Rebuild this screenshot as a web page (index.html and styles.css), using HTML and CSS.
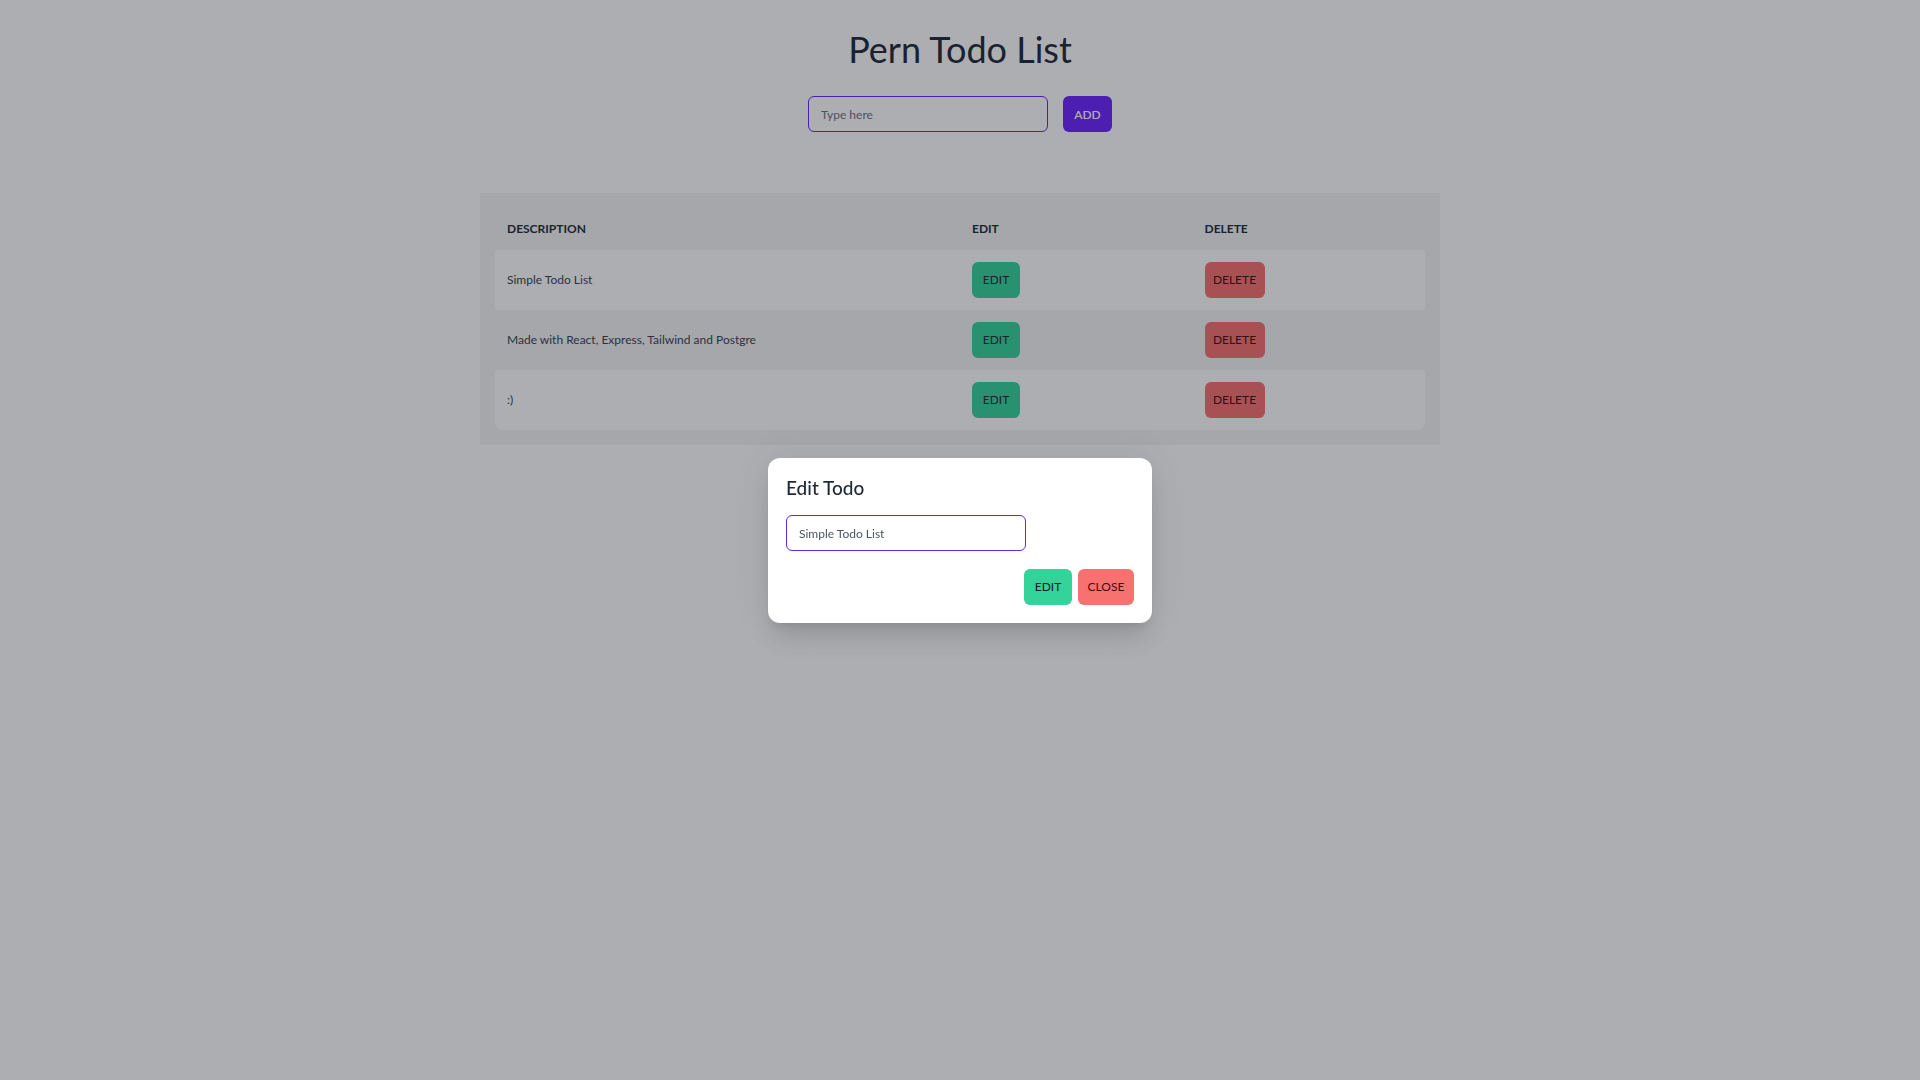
FILE: index.html
```html
<!DOCTYPE html>
<html lang="en">
<head>
<meta charset="utf-8">
<title>Pern Todo List</title>
<link rel="stylesheet" href="styles.css">
</head>
<body>
<main class="page">
  <h1 class="title">Pern Todo List</h1>
  <form class="add-form">
    <input class="add-input" type="text" placeholder="Type here">
    <button class="add-btn" type="button">ADD</button>
  </form>
  <section class="list-card">
    <table class="todo-table">
      <colgroup>
        <col class="col-desc">
        <col class="col-edit">
        <col class="col-del">
      </colgroup>
      <thead>
        <tr><th>Description</th><th>Edit</th><th>Delete</th></tr>
      </thead>
      <tbody>
        <tr class="row-light">
          <td>Simple Todo List</td>
          <td><button class="btn btn-edit" type="button">EDIT</button></td>
          <td><button class="btn btn-delete" type="button">DELETE</button></td>
        </tr>
        <tr class="row-plain">
          <td>Made with React, Express, Tailwind and Postgre</td>
          <td><button class="btn btn-edit" type="button">EDIT</button></td>
          <td><button class="btn btn-delete" type="button">DELETE</button></td>
        </tr>
        <tr class="row-light row-last">
          <td>:)</td>
          <td><button class="btn btn-edit" type="button">EDIT</button></td>
          <td><button class="btn btn-delete" type="button">DELETE</button></td>
        </tr>
      </tbody>
    </table>
  </section>
</main>
<div class="backdrop">
  <div class="modal">
    <h2 class="modal-title">Edit Todo</h2>
    <input class="modal-input" type="text" value="Simple Todo List">
    <div class="modal-actions">
      <button class="btn btn-edit-solid" type="button">EDIT</button>
      <button class="btn btn-close" type="button">CLOSE</button>
    </div>
  </div>
</div>
</body>
</html>
```
FILE: styles.css
```css
* { box-sizing: border-box; }
html, body { margin: 0; padding: 0; }
body {
  background: #ffffff;
  font-family: "Lato", "Open Sans", sans-serif;
  color: #1f2937;
  min-height: 1080px;
}
.page {
  display: flex;
  flex-direction: column;
  align-items: center;
  padding-top: 29px;
}
.title {
  margin: 0;
  font-size: 36px;
  line-height: 40px;
  font-weight: 400;
  color: #1f2937;
}
.add-form {
  display: flex;
  gap: 15px;
  margin-top: 27px;
}
.add-input {
  width: 240px;
  height: 36px;
  border: 1.5px solid #6a24ff;
  border-radius: 6px;
  padding: 0 12px;
  font-family: inherit;
  font-size: 12px;
  color: #374151;
  background: #ffffff;
  outline: none;
}
.add-input::placeholder { color: #6b7280; }
.add-btn {
  width: 49px;
  height: 36px;
  border: none;
  border-radius: 6px;
  background: #6a24ff;
  color: #ffffff;
  font-family: inherit;
  font-size: 12px;
  font-weight: 600;
  padding: 0;
}
.list-card {
  margin-top: 61px;
  width: 960px;
  background: #f4f4f5;
  padding: 15px;
}
.todo-table {
  width: 100%;
  table-layout: fixed;
  border-collapse: separate;
  border-spacing: 0;
}
.col-desc { width: 50%; }
.col-edit { width: 25%; }
.col-del { width: 25%; }
.todo-table th {
  height: 42px;
  padding: 0 12px 2px;
  text-align: left;
  font-size: 12px;
  font-weight: 700;
  text-transform: uppercase;
  color: #1f2937;
  vertical-align: middle;
}
.todo-table td {
  height: 60px;
  padding: 0 12px;
  font-size: 12px;
  color: #374151;
  vertical-align: middle;
}
.todo-table td:first-child { padding-bottom: 2px; }
.row-light td { background: #ffffff; }
.row-plain td { background: transparent; }
.row-last td:first-child { border-bottom-left-radius: 8px; }
.row-last td:last-child { border-bottom-right-radius: 8px; }
.btn {
  height: 36px;
  border: none;
  border-radius: 6px;
  font-family: inherit;
  font-size: 12px;
  font-weight: 400;
  padding: 0 0 1px;
  cursor: pointer;
}
.btn-edit {
  width: 48px;
  background: #34d399;
  color: #1f2937;
}
.btn-delete {
  width: 60px;
  background: #f87171;
  color: #450a0a;
}
.backdrop {
  position: fixed;
  inset: 0;
  background: rgba(20, 22, 34, 0.35);
  display: flex;
  flex-direction: column;
  align-items: center;
  padding-top: 458px;
}
.modal {
  width: 384px;
  background: #ffffff;
  border-radius: 12px;
  padding: 16px 18px 18px;
  box-shadow: 0 20px 25px -5px rgba(0, 0, 0, 0.1), 0 8px 10px -6px rgba(0, 0, 0, 0.1), 0 0 40px rgba(0,0,0,0.08);
  display: flex;
  flex-direction: column;
}
.modal-title {
  margin: 0;
  font-size: 19px;
  line-height: 28px;
  font-weight: 500;
  color: #1f2937;
}
.modal-input {
  margin-top: 13px;
  width: 240px;
  height: 36px;
  border: 1.5px solid #6127f5;
  border-radius: 6px;
  padding: 0 12px;
  font-family: inherit;
  font-size: 12px;
  color: #4b5563;
  outline: none;
}
.modal-actions {
  display: flex;
  justify-content: flex-end;
  gap: 6px;
  margin-top: 18px;
}
.btn-edit-solid {
  width: 48px;
  background: #34d399;
  color: #111827;
}
.btn-close {
  width: 56px;
  background: #f87171;
  color: #450a0a;
}
```
